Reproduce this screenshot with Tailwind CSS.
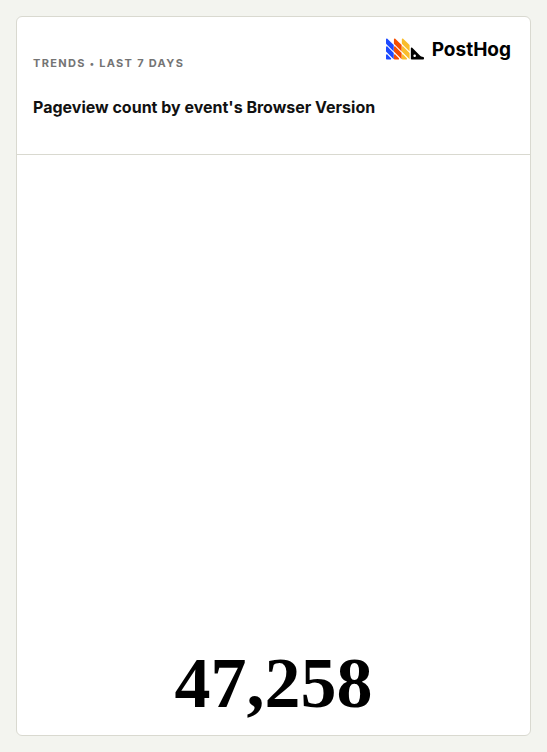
<!DOCTYPE html>
<html lang="en">
<head>
<meta charset="utf-8">
<meta name="viewport" content="width=device-width, initial-scale=1">
<title>Pageview count by event's Browser Version</title>
<script src="https://cdn.jsdelivr.net/npm/@tailwindcss/browser@4"></script>
</head>
<body class="flex min-h-screen bg-[#f3f4ef] p-4 font-['Inter',sans-serif] text-[#111]">
<main class="flex flex-1 flex-col rounded-md border border-[#d9d9d0] bg-white">
  <header class="flex items-start justify-between border-b border-[#d9d9d0] px-4 pt-5 pb-[35px]">
    <div class="pt-4">
      <h2 class="text-[11px] leading-5 font-bold tracking-[0.12em] text-[#747474] uppercase">Trends <span class="text-[9px]">•</span> Last 7 days</h2>
      <h1 class="mt-[21px] text-base leading-6 font-bold whitespace-nowrap">Pageview count by event's Browser Version</h1>
    </div>
    <a href="#" aria-label="PostHog" class="-ml-8 flex h-6 shrink-0 items-center gap-2 pr-[3px] text-black">
      <svg class="h-[22px] w-[38px]" viewBox="0 2 48 27.5" aria-hidden="true">
        <defs>
          <g id="quills">
            <path d="M0 3.4C0 2.5 1.1 2.1 1.7 2.7L9.8 10.8V18.79L.3 9.29A1 1 0 0 1 0 8.58Z"/>
            <path d="M0 13.4C0 12.5 1.1 12.1 1.7 12.7L9.8 20.8V28.79L.3 19.29A1 1 0 0 1 0 18.58Z"/>
            <path d="M0 23.4C0 22.5 1.1 22.1 1.7 22.7L6.3 27.28C6.9 27.9 6.5 29 5.6 29H1A1 1 0 0 1 0 28Z"/>
          </g>
        </defs>
        <use href="#quills" fill="#1d4aff"/>
        <use href="#quills" x="10" fill="#f54e00"/>
        <use href="#quills" x="20" fill="#f9bd2b"/>
        <path fill="#000" fill-rule="evenodd" d="M42.52 23.53l-9.41-9.41c-.63-.63-1.71-.18-1.71.71v13.17c0 .55.45 1 1 1h14.58c.55 0 1-.45 1-1v-1.2c0-.55-.45-.99-1-1.06-1.68-.22-3.25-.99-4.46-2.2zm-6.32 2.26c-.88 0-1.6-.72-1.6-1.6s.72-1.6 1.6-1.6 1.6.72 1.6 1.6-.72 1.6-1.6 1.6z"/>
      </svg>
      <span class="pt-px text-[19px] leading-6 font-bold">PostHog</span>
    </a>
  </header>
  <section class="flex flex-1 items-end justify-center pb-[10px]">
    <p class="font-['Liberation_Serif',serif] text-[72px] leading-[83px] font-bold text-black">47,258</p>
  </section>
</main>
</body>
</html>
